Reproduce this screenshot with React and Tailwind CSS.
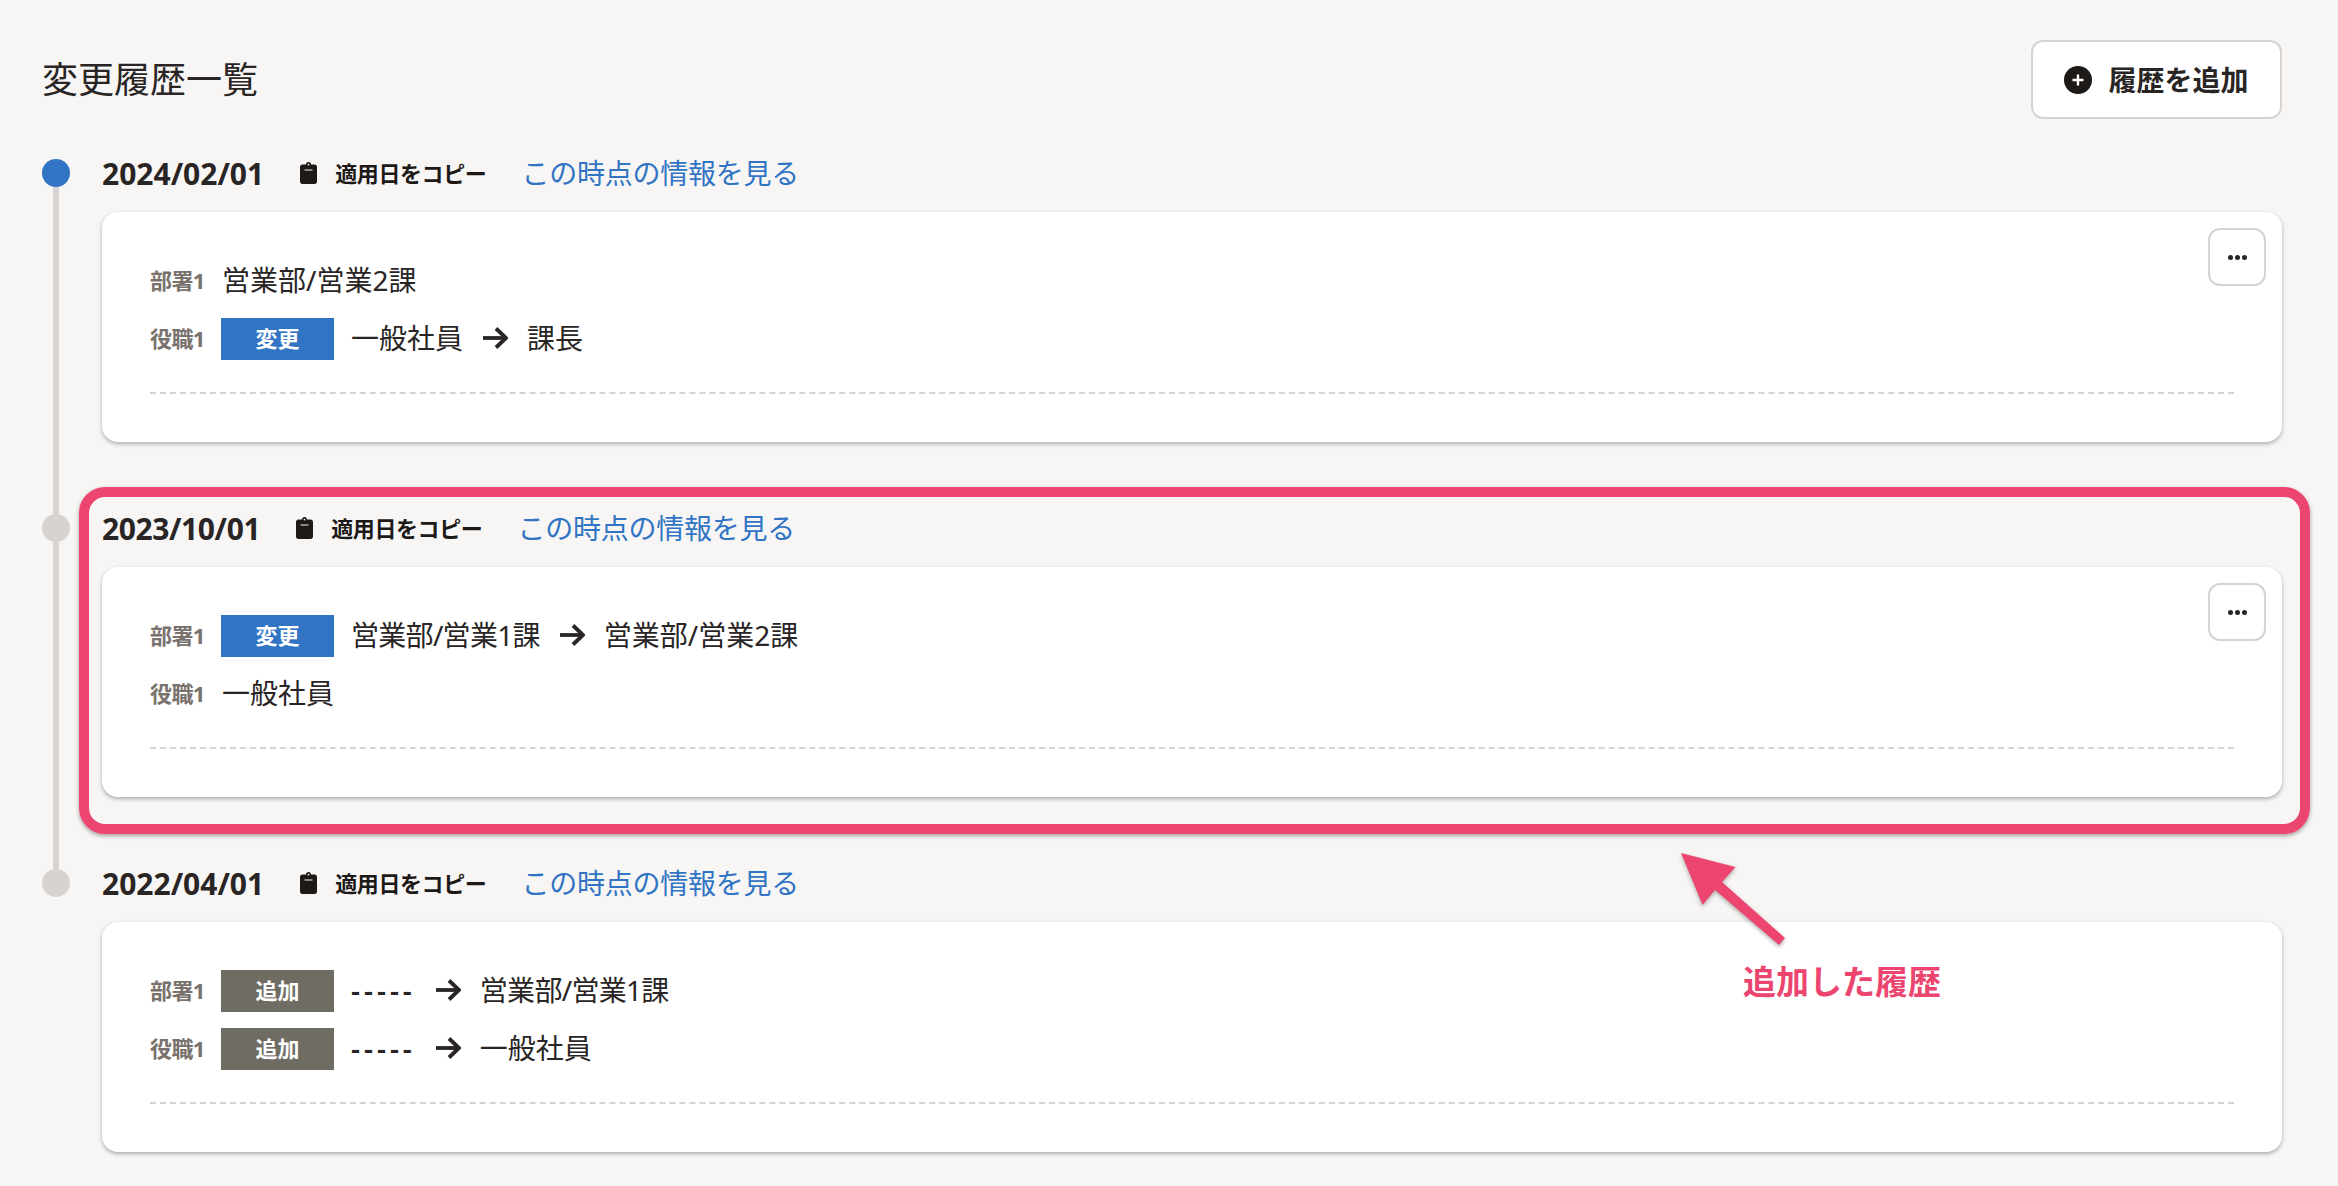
import React from 'react';

const ArrowIcon = () => (
  <svg width="26" height="22" viewBox="0 0 26 22" fill="none" stroke="#292524" strokeWidth="3.8" className="shrink-0">
    <path d="M1 11H24" />
    <path d="M14 1.5L24 11L14 20.5" />
  </svg>
);

const ClipIcon = () => (
  <svg width="17" height="22" viewBox="0 0 17 22" className="shrink-0">
    <path
      fill="#1c1917"
      fillRule="evenodd"
      d="M6 2.6C6 1.2 7 0 8.5 0S11 1.2 11 2.6H14.6C16 2.6 17 3.6 17 5V19.6C17 21 16 22 14.6 22H2.4C1 22 0 21 0 19.6V5C0 3.6 1 2.6 2.4 2.6H6ZM7.6 2.6A0.9 0.9 0 0 0 9.4 2.6A0.9 0.9 0 0 0 7.6 2.6ZM4.5 7.6H12.5V8.6H4.5Z"
    />
  </svg>
);

const Badge = ({ type }) => (
  <span
    className={`flex h-[42px] w-[113px] shrink-0 items-center justify-center pb-[2px] text-[22px] font-bold text-white ${
      type === '変更' ? 'bg-[#3174c4]' : 'bg-[#6f6c64]'
    }`}
  >
    {type}
  </span>
);

// the "1" in the reference font is narrow, so those strings run a little tighter
const Value = ({ text }) => {
  if (text === '-----') return <span className="font-semibold tracking-[4px]">{text}</span>;
  return <span className={text.includes('1') ? 'tracking-[-0.7px]' : ''}>{text}</span>;
};

const Row = ({ label, badge, from, to }) => (
  <div className="flex h-[42px] items-center gap-4">
    <span className="w-[55px] shrink-0 whitespace-nowrap pb-[2px] text-[22px] font-bold tracking-[-0.6px] text-[#78716c]">{label}</span>
    {badge && <Badge type={badge} />}
    {from ? (
      <div className="flex items-center gap-[19px] pb-[2px] pl-[1px] text-[28px] text-[#292524]">
        <Value text={from} />
        <ArrowIcon />
        <Value text={to} />
      </div>
    ) : (
      <span className="pb-[2px] pl-[1px] text-[28px] text-[#292524]">{to}</span>
    )}
  </div>
);

const TimelineItem = ({ date, active, last, rows, menu }) => (
  <div className={`flex gap-8 ${last ? '' : 'h-[355px]'}`}>
    <div className="flex w-7 shrink-0 flex-col items-center">
      <div className={`size-7 shrink-0 rounded-full ${active ? 'bg-[#3174c4]' : 'bg-[#d6d3d1]'}`}></div>
      {!last && <div className="w-1.5 flex-1 bg-[#d6d3d1]"></div>}
    </div>
    <div className="min-w-0 flex-1">
      <div className="mb-[25px] flex h-7 items-center">
        <span className={`text-[30px] font-bold text-[#292524] ${date.includes('/10/') ? 'tracking-[-0.4px]' : ''}`}>{date}</span>
        <div className="ml-[36px] flex items-center gap-[18px]">
          <ClipIcon />
          <span className="text-[22px] font-bold tracking-[-0.4px] text-[#1c1917]">適用日をコピー</span>
        </div>
        <a className="ml-[35px] text-[28px] tracking-[-0.25px] text-[#3174c4]">この時点の情報を見る</a>
      </div>
      <div className="relative h-[230px] rounded-2xl bg-white px-12 pt-12 shadow-[0_2px_4px_rgba(0,0,0,0.3)]">
        <div className="flex flex-col gap-4">
          {rows.map((r) => (
            <Row key={r.label} {...r} />
          ))}
        </div>
        <div className="mt-[32px] border-t-2 border-dashed border-[#d6d3d1]"></div>
        {menu && (
          <button className="absolute right-4 top-4 flex size-[58px] items-center justify-center gap-[2px] rounded-xl border-2 border-[#d6d3d1] bg-white">
            <span className="size-[5px] rounded-full bg-[#292524]"></span>
            <span className="size-[5px] rounded-full bg-[#292524]"></span>
            <span className="size-[5px] rounded-full bg-[#292524]"></span>
          </button>
        )}
      </div>
    </div>
  </div>
);

const App = () => {
  return (
    <div className="relative h-[1186px] w-full overflow-hidden bg-[#f7f6f5] pl-[42px] pr-14 pt-10 font-['Noto_Sans','Noto_Sans_CJK_JP',sans-serif]">
      <div className="mb-10 flex h-[79px] items-center justify-between">
        <h1 className="text-[36px] font-normal text-[#292524]">変更履歴一覧</h1>
        <button className="flex h-[79px] w-[251px] items-center justify-center gap-[16px] rounded-xl border-2 border-[#d6d3d1] bg-white text-[28px] font-bold text-[#292524]">
          <svg width="28" height="28" viewBox="0 0 28 28" className="shrink-0">
            <circle cx="14" cy="14" r="14" fill="#1c1917" />
            <path d="M14 8.5V19.5M8.5 14H19.5" stroke="#fff" strokeWidth="2.4" />
          </svg>
          履歴を追加
        </button>
      </div>

      <TimelineItem
        date="2024/02/01"
        active
        menu
        rows={[
          { label: '部署1', to: '営業部/営業2課' },
          { label: '役職1', badge: '変更', from: '一般社員', to: '課長' },
        ]}
      />
      <TimelineItem
        date="2023/10/01"
        menu
        rows={[
          { label: '部署1', badge: '変更', from: '営業部/営業1課', to: '営業部/営業2課' },
          { label: '役職1', to: '一般社員' },
        ]}
      />
      <TimelineItem
        date="2022/04/01"
        last
        rows={[
          { label: '部署1', badge: '追加', from: '-----', to: '営業部/営業1課' },
          { label: '役職1', badge: '追加', from: '-----', to: '一般社員' },
        ]}
      />

      {/* annotation: highlight frame, arrow and caption */}
      <div className="absolute left-[79px] top-[487px] h-[347px] w-[2231px] rounded-[26px] border-[10px] border-[#ec4570] shadow-[0_2px_4px_rgba(0,0,0,0.35)]"></div>
      <svg className="absolute left-[1670px] top-[845px] drop-shadow-[0_2px_2px_rgba(0,0,0,0.3)]" width="125" height="110" viewBox="1670 845 125 110">
        <path
          fill="#ec4570"
          d="M1681 853L1735.5 867L1722 882L1785 938L1779 945L1715 890L1702.6 905Z"
        />
      </svg>
      <div className="absolute left-[1743px] top-[958px] text-[33px] font-bold leading-[48px] text-[#ec4570]">追加した履歴</div>
    </div>
  );
};

export default App;
